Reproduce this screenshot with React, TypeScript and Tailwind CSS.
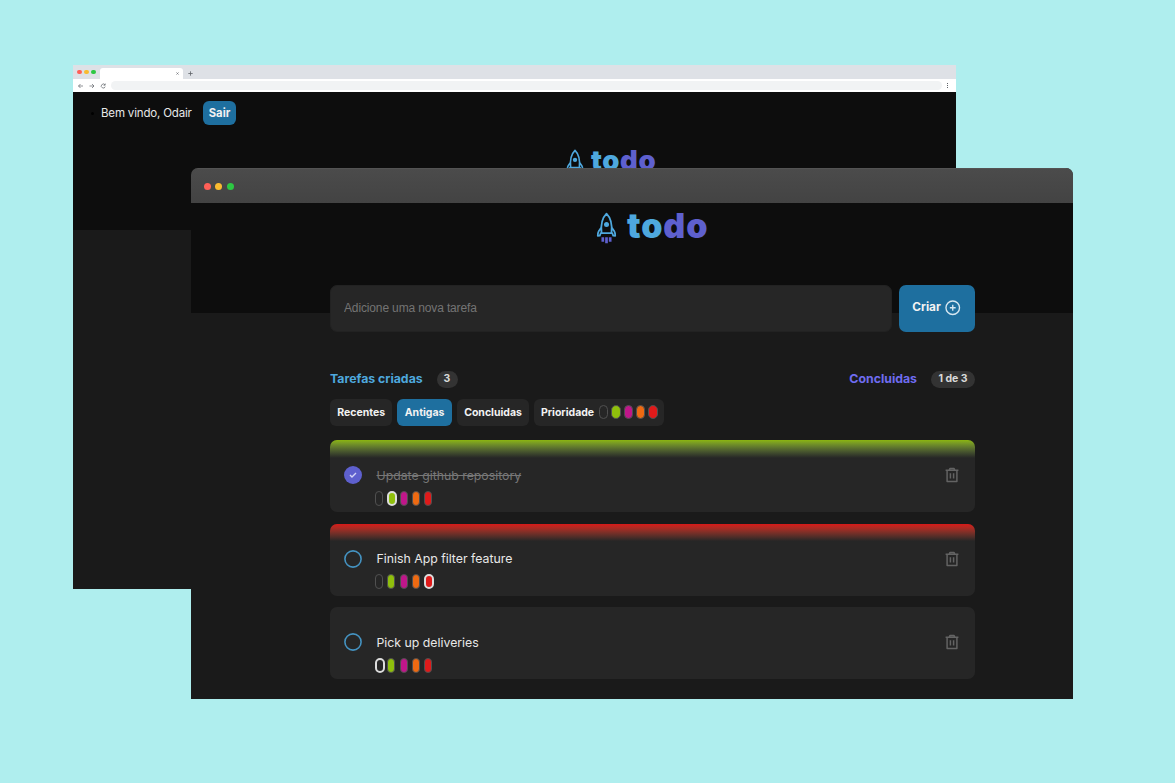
import type { ReactNode } from "react";

const colors = ["bg-transparent", "bg-[#8fbf0c]", "bg-[#c0168a]", "bg-[#ee6a12]", "bg-[#e01a1a]"];

function Rocket({ className }: { className: string }) {
  return (
    <svg viewBox="0 0 20 32" className={className} fill="none">
      <path
        d="M5 20.800C4.200 13 5.800 5.800 10 1.600c4.200 4.200 5.800 11.400 5 19.200M4.600 15.800l-2.400 3.400c-.6.9-.9 2.200-.9 4.600l2-.2.900-2.400h11.600l.9 2.400 2 .2c0-2.400-.3-3.700-.9-4.600l-2.400-3.400"
        stroke="#4ea8de"
        strokeWidth="1.800"
        strokeLinejoin="round"
        strokeLinecap="round"
      />
      <circle cx="10" cy="12.400" r="2.500" fill="#4ea8de" />
      <path d="M6.300 25.200v4.600M10 25.200v6M13.700 25.200v4.600" stroke="#5e60ce" strokeWidth="2.700" />
    </svg>
  );
}

function Trash() {
  return (
    <svg viewBox="0 0 14 16" className="h-[16px] w-[14px]" fill="none" stroke="#636363" strokeWidth="1.500">
      <path d="M.6 3.300h12.800M4.300 3.100l.6-1.600h4.200l.6 1.600M2.100 3.500v11h9.800v-11M5.400 6.300v5.200M8.600 6.300v5.200" strokeLinejoin="round" />
    </svg>
  );
}

function Dots({ className, dot }: { className: string; dot: string }) {
  return (
    <div className={`flex items-center ${className}`}>
      <span className={`rounded-full bg-[#ff5f57] ${dot}`} />
      <span className={`rounded-full bg-[#f9bb30] ${dot}`} />
      <span className={`rounded-full bg-[#2dc843] ${dot}`} />
    </div>
  );
}

function BackWindow() {
  return (
    <section className="absolute left-[73px] top-[65px] flex h-[523.600px] w-[882.600px] flex-col overflow-hidden bg-[#1a1a1a]">
      <div className="flex h-[14px] shrink-0 items-end bg-[#dee1e6]">
        <Dots className="h-[14px] w-[27px] gap-[2.600px] pl-[4.300px]" dot="size-[4.400px]" />
        <div className="flex h-[11.500px] w-[83px] items-center justify-end rounded-t-[3px] bg-white pr-[4px]">
          <svg viewBox="0 0 4 4" className="size-[3px]" stroke="#5f6368" strokeWidth=".8"><path d="M.5.5l3 3M3.500.5l-3 3" /></svg>
        </div>
        <svg viewBox="0 0 5 5" className="mb-[3px] ml-[5px] size-[5px]" stroke="#5f6368" strokeWidth=".8"><path d="M2.500.3v4.400M.3 2.500h4.400" /></svg>
      </div>
      <div className="flex h-[13px] shrink-0 items-center bg-white">
        <svg viewBox="0 0 34 8" className="ml-[4px] h-[8px] w-[34px] shrink-0" fill="none" stroke="#5f6368" strokeWidth=".7">
          <path d="M6 4H1.500M3.500 2l-2 2 2 2M12.500 4H17M15 2l2 2-2 2M28 3a2 2 0 1 0 .2 1.600M28.200 1.500v1.700h-1.700" />
        </svg>
        <div className="h-[9px] w-[831px] rounded-full bg-[#f1f3f4]" />
        <div className="ml-[5px] flex flex-col gap-[1px]">
          <i className="size-[1px] bg-[#5f6368]" /><i className="size-[1px] bg-[#5f6368]" /><i className="size-[1px] bg-[#5f6368]" />
        </div>
      </div>
      <div className="h-[138px] shrink-0 bg-[#0d0d0d]">
        <div className="flex h-[42px] items-center">
          <span className="ml-[18px] size-[3px] rounded-full bg-black" />
          <span className="ml-[7px] w-[102px] whitespace-nowrap pt-[2px] text-[11.500px] tracking-[-0.170px] text-[#e8e8e8]">Bem vindo, Odair</span>
          <button className="flex h-[24.500px] w-[33px] items-center justify-center rounded-[6px] bg-[#1e6f9f] pt-px text-[11.250px] font-bold text-[#f2f2f2]">Sair</button>
        </div>
        <div className="flex pl-[493px] pt-[14.500px]">
          <Rocket className="mt-[0.500px] h-[28px] w-[18px]" />
          <h2 className="-mt-px ml-[7px] text-[27.500px] font-black leading-[24px] tracking-[0.600px] text-[#4ea8de]">to<span className="text-[#5e60ce]">do</span></h2>
        </div>
      </div>
    </section>
  );
}

function Filter({ children, className }: { children: ReactNode; className: string }) {
  return (
    <button className={`flex h-[27px] items-center justify-center whitespace-nowrap rounded-[6px] pt-px text-[10.500px] font-bold text-[#f2f2f2] ${className}`}>
      {children}
    </button>
  );
}

function Task({ title, level, done, bar }: { title: string; level: number; done?: boolean; bar?: string }) {
  return (
    <article className="flex h-[72px] flex-col overflow-hidden rounded-[7px] bg-[#262626]">
      <div className={`h-[17.500px] shrink-0 ${bar ?? ""}`} />
      <div className="flex h-[35px] shrink-0 items-center pl-[14.300px] pr-[16px]">
        {done ? (
          <span className="flex size-[18px] items-center justify-center rounded-full bg-[#5e60ce]">
            <svg viewBox="0 0 8 6" className="h-[6px] w-[8px]" fill="none" stroke="#d4d5f6" strokeWidth="1.400"><path d="M1 3l2 2 4-4" /></svg>
          </span>
        ) : (
          <svg viewBox="0 0 18 18" className="size-[18px]" fill="none" stroke="#4492c0" strokeWidth="1.600"><circle cx="9" cy="9" r="8.100" /></svg>
        )}
        <p className={`ml-[14.200px] flex-1 pt-px text-[12.300px] ${done ? "text-[#777777] line-through" : "text-[#e8e8e8]"}`}>{title}</p>
        <Trash />
      </div>
      <div className="-mt-[2px] flex h-[15px] shrink-0 pl-[45px]">
        {colors.map((c, i) => (
          <span key={c} className="flex w-[12.250px]">
            <span className={`h-[15px] rounded-[5px] ${c} ${i === level ? "w-[9.500px] border-[2px] border-[#dcdcdc]" : "w-[8px] border border-[#505050]"}`} />
          </span>
        ))}
      </div>
    </article>
  );
}

function FrontWindow() {
  return (
    <section className="absolute left-[191px] top-[168px] flex h-[530.600px] w-[881.600px] flex-col overflow-hidden rounded-t-[7px] bg-[#1a1a1a]">
      <div className="flex h-[35px] shrink-0 items-center border-t border-[#535353] bg-linear-to-b from-[#4b4b4b] to-[#434343] pl-[13.300px]">
        <Dots className="gap-[4.200px]" dot="size-[7px]" />
      </div>
      <header className="flex h-[109.600px] shrink-0 items-start bg-[#0d0d0d] pl-[405px] pt-[9px]">
        <Rocket className="h-[32px] w-[21px]" />
        <h1 className="-mt-px ml-[10px] text-[34px] font-black leading-[30px] tracking-[0.900px] text-[#4ea8de]">to<span className="text-[#5e60ce]">do</span></h1>
      </header>
      <main className="-mt-[27.900px] flex flex-col pl-[139px]">
        <div className="flex h-[46.800px] w-[645px] gap-[7px]">
          <input
            placeholder="Adicione uma nova tarefa"
            className="w-[562px] rounded-[7px] border border-[#222222] bg-[#262626] px-[13px] pb-px font-['Liberation_Sans',sans-serif] text-[12px] tracking-[-0.140px] text-white placeholder:text-[#747474]"
          />
          <button className="flex flex-1 items-center justify-center gap-[4.500px] rounded-[7px] bg-[#1e6f9f] pr-px text-[11.800px] font-bold text-[#f2f2f2]">
            Criar
            <svg viewBox="0 0 16 16" className="size-[15.500px]" fill="none" stroke="#d6e7f1" strokeWidth="1.400"><circle cx="8" cy="8" r="7" /><path d="M8 5v6M5 8h6" /></svg>
          </button>
        </div>
        <div className="mt-[39.200px] flex h-[17px] w-[645px] items-center text-[12.300px] font-bold">
          <h2 className="w-[106.500px] whitespace-nowrap text-[#4ea8de]">Tarefas criadas</h2>
          <span className="flex h-[17px] w-[21px] items-center justify-center rounded-full bg-[#333333] text-[10.500px] text-[#d9d9d9]">3</span>
          <h2 className="ml-auto mr-[14px] text-[#6f6cf0]">Concluidas</h2>
          <span className="flex h-[17px] w-[44px] items-center justify-center rounded-full bg-[#333333] text-[10.500px] text-[#d9d9d9]">1 de 3</span>
        </div>
        <div className="mt-[11.200px] flex gap-[4.800px]">
          <Filter className="w-[62.300px] bg-[#262626]">Recentes</Filter>
          <Filter className="w-[55px] bg-[#1e6f9f]">Antigas</Filter>
          <Filter className="w-[72.300px] bg-[#262626]">Concluidas</Filter>
          <Filter className="w-[130.500px] bg-[#262626]">
            <span>Prioridade</span>
            <span className="-mt-px ml-[4.800px] flex gap-[2.800px]">
              {colors.map((c) => <i key={c} className={`h-[14px] w-[9.500px] rounded-[5px] border border-[#505050] ${c}`} />)}
            </span>
          </Filter>
        </div>
        <div className="mt-[14.400px] flex w-[645px] flex-col gap-[11.600px]">
          <Task title="Update github repository" level={1} done bar="bg-linear-to-b from-[#8bb50d] to-[#262626]" />
          <Task title="Finish App filter feature" level={4} bar="bg-linear-to-b from-[#d81818] to-[#262626]" />
          <Task title="Pick up deliveries" level={0} />
        </div>
      </main>
    </section>
  );
}

export default function App() {
  return (
    <div className="relative h-[783px] w-[1175px] overflow-hidden bg-[#afeeee] font-[Inter,sans-serif]">
      <BackWindow />
      <FrontWindow />
    </div>
  );
}
